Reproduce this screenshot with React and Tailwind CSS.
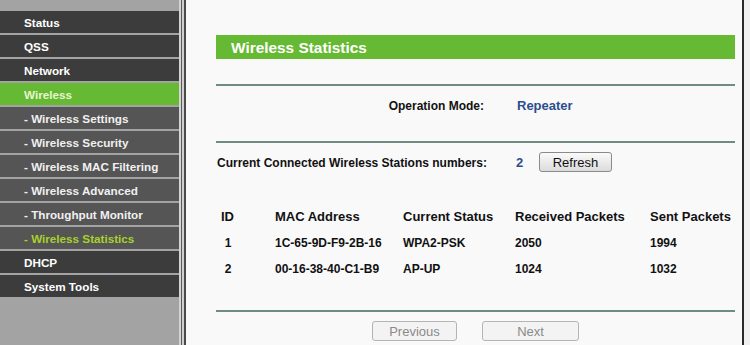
import React from 'react';

const menu = [
  { label: 'Status', type: 'top' },
  { label: 'QSS', type: 'top' },
  { label: 'Network', type: 'top' },
  { label: 'Wireless', type: 'active' },
  { label: '- Wireless Settings', type: 'sub' },
  { label: '- Wireless Security', type: 'sub' },
  { label: '- Wireless MAC Filtering', type: 'sub' },
  { label: '- Wireless Advanced', type: 'sub' },
  { label: '- Throughput Monitor', type: 'sub' },
  { label: '- Wireless Statistics', type: 'subActive' },
  { label: 'DHCP', type: 'top' },
  { label: 'System Tools', type: 'top' },
];

const rowStyle = {
  top: 'bg-[#3c3c3c] text-white',
  active: 'bg-[#66b933] text-[#e6f5d0]',
  sub: 'bg-[#555555] text-[#f0f0f0]',
  subActive: 'bg-[#555555] text-[#a8d12c]',
};

const stations = [
  { id: 1, mac: '1C-65-9D-F9-2B-16', status: 'WPA2-PSK', rx: 2050, tx: 1994 },
  { id: 2, mac: '00-16-38-40-C1-B9', status: 'AP-UP', rx: 1024, tx: 1032 },
];

function Sidebar() {
  return (
    <div className="w-[179px] shrink-0 bg-[#a3a3a3] pt-[11px]">
      {menu.map((item) => (
        <div
          key={item.label}
          className={`${rowStyle[item.type]} h-[22px] mb-[2px] flex items-center pl-[24px] pt-[1px] text-[11.7px] font-bold`}
        >
          {item.label}
        </div>
      ))}
    </div>
  );
}

function Divider() {
  return <div className="h-[2px] bg-[#6f8c82]" />;
}

export default function App() {
  return (
    <div className="flex h-[345px] w-[750px] overflow-hidden bg-[#f6f6f6] font-['Liberation_Sans',Arial,sans-serif]">
      <Sidebar />
      <div className="w-[2px] bg-[#d4d4d4]" />
      <div className="w-[1px] bg-[#5a5a5a]" />
      <div className="w-[2px] bg-[#cfcfcf]" />
      <div className="w-[2px] bg-[#4a4a4a]" />

      <div className="flex-1 bg-[#f9f9f9] pl-[30px] pr-[7px] pt-[35px] text-[#111]">
        <div className="h-[24px] bg-[#66b933] flex items-center pl-[15px] pt-[1px] text-[15.4px] font-bold text-white">
          Wireless Statistics
        </div>

        <div className="mt-[25px]">
          <Divider />
        </div>

        <div className="flex items-center h-[37px] mt-[1px]">
          <div className="w-[268px] text-right text-[12px] font-bold">Operation Mode:</div>
          <div className="ml-[33px] text-[13px] font-bold text-[#2c4e8e]">Repeater</div>
        </div>

        <div className="mt-[17px]">
          <Divider />
        </div>

        <div className="flex items-center h-[37px] mt-[1px]">
          <div className="w-[300px] text-[12px] font-bold pl-[1px]">
            Current Connected Wireless Stations numbers:
          </div>
          <div className="w-[23px] text-[13px] font-bold text-[#2c4e8e]">2</div>
          <button className="h-[20px] w-[73px] -mt-[2px] rounded-[3px] border border-[#8a8a8a] bg-gradient-to-b from-[#fafafa] to-[#dcdcdc] text-[13px] text-[#111]">
            Refresh
          </button>
        </div>

        <div className="mt-[23px] grid grid-cols-[59px_128px_112px_135px_1fr] text-[13px] font-bold">
          <div className="h-[26px] flex items-center"><span className="w-[22px] pl-[1px] text-center">ID</span></div>
          <div className="h-[26px] flex items-center">MAC Address</div>
          <div className="h-[26px] flex items-center">Current Status</div>
          <div className="h-[26px] flex items-center">Received Packets</div>
          <div className="h-[26px] flex items-center">Sent Packets</div>
          {stations.map((s) => (
            <React.Fragment key={s.id}>
              <div className="h-[26px] flex items-center text-[12px]"><span className="w-[22px] pl-[2px] text-center">{s.id}</span></div>
              <div className="h-[26px] flex items-center text-[12px]">{s.mac}</div>
              <div className="h-[26px] flex items-center text-[12px]">{s.status}</div>
              <div className="h-[26px] flex items-center text-[12px]">{s.rx}</div>
              <div className="h-[26px] flex items-center text-[12px]">{s.tx}</div>
            </React.Fragment>
          ))}
        </div>

        <div className="mt-[28px]">
          <Divider />
        </div>

        <div className="flex justify-center gap-[25px] mt-[9px]">
          <button className="h-[20px] w-[85px] rounded-[3px] border border-[#b4b4b4] bg-[#f3f3f3] text-[13px] text-[#8a8a8a]">
            Previous
          </button>
          <button className="h-[20px] w-[97px] rounded-[3px] border border-[#b4b4b4] bg-[#f3f3f3] text-[13px] text-[#8a8a8a]">
            Next
          </button>
        </div>
      </div>

      <div className="w-[2px] bg-[#2a2a2a]" />
      <div className="w-[6px] bg-[#f0f0f0]" />
    </div>
  );
}
